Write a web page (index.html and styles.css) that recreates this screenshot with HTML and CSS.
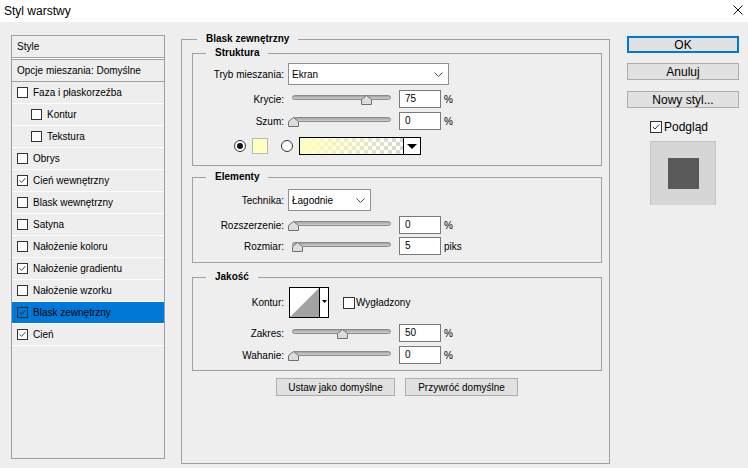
FILE: index.html
```html
<!DOCTYPE html>
<html lang="pl">
<head>
<meta charset="utf-8">
<title>Styl warstwy</title>
<link rel="stylesheet" href="styles.css">
</head>
<body>
<div class="titlebar">
  <span class="title">Styl warstwy</span>
  <svg class="close" width="10" height="10" viewBox="0 0 10 10"><path d="M0.5 0.5L9.5 9.5M9.5 0.5L0.5 9.5" stroke="#111" stroke-width="1" fill="none"/></svg>
</div>
<div class="body">
  <div class="sidebar">
    <div class="side-head">Style</div>
    <ul class="side-list">
      <li class="row first">Opcje mieszania: Domyślne</li>
      <li class="row"><span class="cb"></span>Faza i płaskorzeźba</li>
      <li class="row sub"><span class="cb"></span>Kontur</li>
      <li class="row sub"><span class="cb"></span>Tekstura</li>
      <li class="row"><span class="cb"></span>Obrys</li>
      <li class="row"><span class="cb on"><svg viewBox="0 0 11 11"><path d="M2 5.3L4.4 7.8L9 2.6" fill="none" stroke="#333" stroke-width="1.1"/></svg></span>Cień wewnętrzny</li>
      <li class="row"><span class="cb"></span>Blask wewnętrzny</li>
      <li class="row"><span class="cb"></span>Satyna</li>
      <li class="row"><span class="cb"></span>Nałożenie koloru</li>
      <li class="row"><span class="cb on"><svg viewBox="0 0 11 11"><path d="M2 5.3L4.4 7.8L9 2.6" fill="none" stroke="#333" stroke-width="1.1"/></svg></span>Nałożenie gradientu</li>
      <li class="row"><span class="cb"></span>Nałożenie wzorku</li>
      <li class="row selected"><span class="cb on"><svg viewBox="0 0 11 11"><path d="M2 5.3L4.4 7.8L9 2.6" fill="none" stroke="#222" stroke-width="1.1"/></svg></span>Blask zewnętrzny</li>
      <li class="row"><span class="cb on"><svg viewBox="0 0 11 11"><path d="M2 5.3L4.4 7.8L9 2.6" fill="none" stroke="#333" stroke-width="1.1"/></svg></span>Cień</li>
    </ul>
  </div>

  <div class="main">
    <fieldset class="group outer">
      <legend class="outer-legend">Blask zewnętrzny</legend>

      <fieldset class="group inner struktura">
        <legend>Struktura</legend>
        <div class="frow">
          <span class="lbl">Tryb mieszania:</span>
          <div class="select wide"><span>Ekran</span><svg width="9" height="5" viewBox="0 0 9 5"><path d="M0.5 0.5L4.5 4.5L8.5 0.5" fill="none" stroke="#555"/></svg></div>
        </div>
        <div class="frow gap5">
          <span class="lbl">Krycie:</span>
          <div class="slider"><div class="track"></div><svg class="thumb" style="left:69px" width="11" height="10" viewBox="0 0 11 10"><path d="M0.5 4.5L5.5 0.5L10.5 4.5V9.5H0.5Z" fill="#dcdcdc" stroke="#707070"/></svg></div>
          <span class="num">75</span><span class="unit">%</span>
        </div>
        <div class="frow gap4">
          <span class="lbl">Szum:</span>
          <div class="slider"><div class="track"></div><svg class="thumb" style="left:-4px" width="11" height="10" viewBox="0 0 11 10"><path d="M0.5 4.5L5.5 0.5L10.5 4.5V9.5H0.5Z" fill="#dcdcdc" stroke="#707070"/></svg></div>
          <span class="num">0</span><span class="unit">%</span>
        </div>
        <div class="frow colors">
          <span class="radio on"></span>
          <span class="swatch"></span>
          <span class="radio"></span>
          <div class="gradbar"><span class="gradfill"></span><span class="dd"><span class="tri"></span></span></div>
        </div>
      </fieldset>

      <fieldset class="group inner elementy">
        <legend>Elementy</legend>
        <div class="frow">
          <span class="lbl">Technika:</span>
          <div class="select narrow"><span>Łagodnie</span><svg width="9" height="5" viewBox="0 0 9 5"><path d="M0.5 0.5L4.5 4.5L8.5 0.5" fill="none" stroke="#555"/></svg></div>
        </div>
        <div class="frow gap5">
          <span class="lbl">Rozszerzenie:</span>
          <div class="slider"><div class="track"></div><svg class="thumb" style="left:-4px" width="11" height="10" viewBox="0 0 11 10"><path d="M0.5 4.5L5.5 0.5L10.5 4.5V9.5H0.5Z" fill="#dcdcdc" stroke="#707070"/></svg></div>
          <span class="num">0</span><span class="unit">%</span>
        </div>
        <div class="frow gap3">
          <span class="lbl">Rozmiar:</span>
          <div class="slider"><div class="track"></div><svg class="thumb" style="left:0px" width="11" height="10" viewBox="0 0 11 10"><path d="M0.5 4.5L5.5 0.5L10.5 4.5V9.5H0.5Z" fill="#dcdcdc" stroke="#707070"/></svg></div>
          <span class="num">5</span><span class="unit">piks</span>
        </div>
      </fieldset>

      <fieldset class="group inner jakosc">
        <legend>Jakość</legend>
        <div class="frow">
          <span class="lbl">Kontur:</span>
          <svg class="contour" width="40" height="31" viewBox="0 0 40 31">
            <rect x="0.5" y="0.5" width="39" height="30" fill="#fff" stroke="#000"/>
            <path d="M1 30L30 1V30Z" fill="#a2a2a2"/>
            <path d="M30.5 0.5V30.5" stroke="#000"/>
            <path d="M33 13H38L35.5 16Z" fill="#000"/>
          </svg>
          <span class="cb big"></span><span class="cblabel">Wygładzony</span>
        </div>
        <div class="frow gap6">
          <span class="lbl">Zakres:</span>
          <div class="slider"><div class="track"></div><svg class="thumb" style="left:45px" width="11" height="10" viewBox="0 0 11 10"><path d="M0.5 4.5L5.5 0.5L10.5 4.5V9.5H0.5Z" fill="#dcdcdc" stroke="#707070"/></svg></div>
          <span class="num">50</span><span class="unit">%</span>
        </div>
        <div class="frow gap4">
          <span class="lbl">Wahanie:</span>
          <div class="slider"><div class="track"></div><svg class="thumb" style="left:-4px" width="11" height="10" viewBox="0 0 11 10"><path d="M0.5 4.5L5.5 0.5L10.5 4.5V9.5H0.5Z" fill="#dcdcdc" stroke="#707070"/></svg></div>
          <span class="num">0</span><span class="unit">%</span>
        </div>
      </fieldset>

      <div class="defaults">
        <span class="btn small b1">Ustaw jako domyślne</span>
        <span class="btn small b2">Przywróć domyślne</span>
      </div>
    </fieldset>
  </div>

  <div class="actions">
    <span class="btn ok">OK</span>
    <span class="btn cancel">Anuluj</span>
    <span class="btn newstyle">Nowy styl...</span>
    <div class="preview-check"><span class="cb big on"><svg viewBox="0 0 11 11"><path d="M2 5.3L4.4 7.8L9 2.6" fill="none" stroke="#333" stroke-width="1.1"/></svg></span><span>Podgląd</span></div>
    <div class="preview"><span class="preview-square"></span></div>
  </div>
</div>
</body>
</html>
```

FILE: styles.css
```css
* { box-sizing: border-box; }
html, body { margin: 0; padding: 0; }
body {
  width: 748px;
  height: 468px;
  overflow: hidden;
  background: #eeeeee;
  font-family: "Liberation Sans", Arial, sans-serif;
  font-size: 10px;
  color: #000;
}

/* title bar */
.titlebar {
  height: 22px;
  background: #fff;
  display: flex;
  align-items: center;
  justify-content: space-between;
  padding: 0 5px 0 4px;
}
.title { font-size: 12px; }
.close { display: block; margin-top: -3px; }

/* layout */
.body {
  display: flex;
  align-items: flex-start;
  padding: 10px 0 0 11px;
}

/* sidebar */
.sidebar {
  width: 154px;
  height: 424px;
  margin-top: 3px;
  border: 1px solid #a0a0a0;
  flex: none;
}
.side-head {
  height: 22px;
  border-bottom: 1px solid #a0a0a0;
  box-shadow: 0 1px 0 #fff;
  display: flex;
  align-items: center;
  padding-left: 5px;
}
.side-list {
  list-style: none;
  margin: 1px 0 0;
  padding: 0;
}
.row {
  height: 22px;
  border-bottom: 1px solid #fff;
  display: flex;
  align-items: center;
  padding-left: 5px;
  white-space: nowrap;
}
.row.first {
  height: 23px;
  border-top: 1px solid #a0a0a0;
  border-bottom: 1px solid #a0a0a0;
}
.row.sub { padding-left: 19px; }
.row.selected { background: #0078d7; }
.row.selected .cb { background: transparent; }

.cb {
  width: 11px;
  height: 11px;
  border: 1px solid #333;
  background: #fff;
  margin-right: 5px;
  flex: none;
  display: inline-flex;
}
.cb svg { width: 9px; height: 9px; display: block; }
.cb.big { width: 12px; height: 12px; }
.cb.big svg { width: 10px; height: 10px; }

/* main */
.main {
  margin-left: 16px;
  width: 429px;
  flex: none;
}
.group {
  margin: 0;
  border: 1px solid #a0a0a0;
  min-width: 0;
}
.group legend {
  font-weight: bold;
  line-height: 14px;
  padding: 0 9px;
}
.outer {
  height: 432px;
  padding: 0 7px 0 10px;
}
.outer-legend { margin-left: 5px; }
.inner { padding: 0; }
.inner legend { margin-left: 13px; }

.struktura { padding: 3px 0 10px; }
.elementy { margin-top: 4px; padding: 5px 0 7px; }
.jakosc { margin-top: 7px; padding: 3px 0 6px; }

.frow { display: flex; align-items: center; }
.gap3 { margin-top: 3px; }
.gap4 { margin-top: 4px; }
.gap5 { margin-top: 5px; }
.gap6 { margin-top: 6px; }

.lbl {
  width: 91px;
  flex: none;
  text-align: right;
  white-space: nowrap;
}

.select {
  margin-left: 4px;
  height: 22px;
  background: #fff;
  border: 1px solid #8f8f8f;
  display: flex;
  align-items: center;
  justify-content: space-between;
  padding: 0 5px 0 3px;
}
.select.wide { width: 161px; }
.select.narrow { width: 83px; }

.slider {
  position: relative;
  width: 99px;
  height: 18px;
  margin: 0 8px;
  flex: none;
}
.track {
  margin-top: 5px;
  height: 5px;
  border-radius: 3px;
  border: 1px solid #8a8a8a;
  background: linear-gradient(#a4a4a4, #bcbcbc 60%, #d2d2d2);
}
.thumb {
  position: absolute;
  top: 5px;
  display: block;
}

.num {
  width: 42px;
  height: 18px;
  flex: none;
  background: #fff;
  border: 1px solid #7a7a7a;
  padding-left: 5px;
  line-height: 16px;
}
.unit { margin-left: 3px; }

/* color row */
.colors { margin-top: 7px; height: 18px; }
.radio {
  width: 12px;
  height: 12px;
  border-radius: 50%;
  border: 1px solid #333;
  background: #fff;
  flex: none;
  display: flex;
  align-items: center;
  justify-content: center;
}
.radio.on::after {
  content: "";
  width: 6px;
  height: 6px;
  border-radius: 50%;
  background: #111;
}
.colors .radio.on { margin-left: 41px; }
.swatch {
  width: 16px;
  height: 16px;
  margin-left: 6px;
  background: #ffffc0;
  border: 1px solid #b8b8b8;
  flex: none;
}
.colors .radio:not(.on) { margin-left: 13px; }
.gradbar {
  margin-left: 6px;
  width: 122px;
  height: 18px;
  border: 1px solid #000;
  display: flex;
  flex: none;
}
.gradfill {
  flex: 1;
  background:
    linear-gradient(to right, #ffffc0, rgba(255,255,192,0.6) 40%, rgba(255,255,192,0)),
    repeating-conic-gradient(#d6d6d6 0 25%, #ffffff 0 50%) 0 0 / 8px 8px;
}
.dd {
  width: 17px;
  border-left: 1px solid #000;
  background: #fff;
  display: flex;
  align-items: center;
  justify-content: center;
}
.tri {
  width: 0;
  height: 0;
  border-left: 5px solid transparent;
  border-right: 5px solid transparent;
  border-top: 5px solid #000;
}

/* quality */
.contour { margin-left: 5px; display: block; flex: none; }
.jakosc .cb.big { margin-left: 14px; margin-right: 1px; }

/* buttons */
.btn {
  display: flex;
  align-items: center;
  justify-content: center;
  background: #e1e1e1;
  border: 1px solid #adadad;
  white-space: nowrap;
}
.defaults {
  margin-top: 7px;
  display: flex;
  justify-content: center;
  gap: 10px;
}
.btn.small { height: 18px; font-size: 10px; }
.btn.b1 { width: 119px; }
.btn.b2 { width: 113px; }

.actions {
  margin-left: 17px;
  margin-top: 4px;
  width: 112px;
  flex: none;
  display: flex;
  flex-direction: column;
}
.actions .btn { width: 112px; height: 17px; font-size: 12px; }
.btn.ok { border: 2px solid #0078d7; }
.btn.cancel { margin-top: 10px; }
.btn.newstyle { margin-top: 11px; }
.preview-check {
  margin: 12px 0 0 23px;
  display: flex;
  align-items: center;
  font-size: 12px;
}
.preview-check .cb { margin-right: 2px; }
.preview {
  margin: 7px 0 0 23px;
  width: 66px;
  height: 64px;
  background: #d6d6d6;
  border-top: 1px solid #c4c4c4;
  border-left: 1px solid #c4c4c4;
  border-right: 1px solid #c4c4c4;
  display: flex;
  align-items: center;
  justify-content: center;
}
.preview-square {
  width: 31px;
  height: 31px;
  background: #595959;
}
```
